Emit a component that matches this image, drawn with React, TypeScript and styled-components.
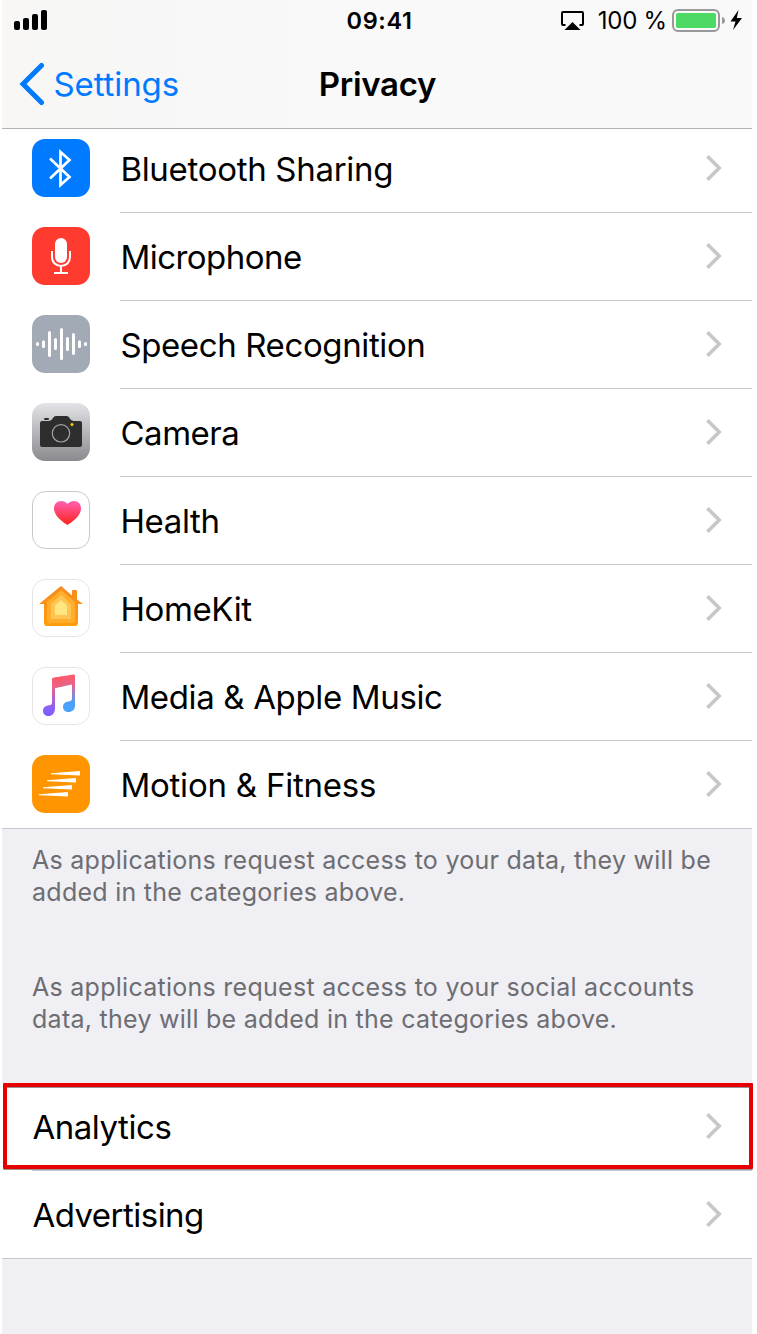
import React from 'react';
import styled, { createGlobalStyle } from 'styled-components';

const GlobalStyle = createGlobalStyle`
  * { box-sizing: border-box; }
  body { margin: 0; background: #fff; font-family: Inter, "Liberation Sans", sans-serif; color: #000; }
  svg { display: block; flex: none; }
`;

const Page = styled.div`
  width: 757px;
  height: 1334px;
  overflow: hidden;
`;

const Screen = styled.div`
  width: 750px;
  height: 1334px;
  margin-left: 2px;
  background: #efeff4;
`;

const Header = styled.header`
  position: relative;
  z-index: 1;
  height: 129px;
  border-bottom: 1px solid #b2b2b2;
  background: linear-gradient(90deg, #f8f7f5 0, #f7f7f7 150px, #f9f9f9 330px);
`;

const Bar = styled.div<{ $height: number }>`
  display: grid;
  grid-template-columns: 1fr auto 1fr;
  align-items: center;
  height: ${(p) => p.$height}px;
`;

const StatusRight = styled.div`
  display: flex;
  align-items: center;
  justify-content: flex-end;
  padding-right: 8px;
`;

const Clock = styled.time`
  padding: 1px 0 0 5px;
  font-size: 23.5px;
  line-height: 28px;
  font-weight: 600;
  letter-spacing: 0.6px;
`;

const Percent = styled.span`
  margin: 0 5px 0 14px;
  padding-top: 2px;
  font-size: 24px;
  line-height: 28px;
  letter-spacing: -0.2px;
  white-space: nowrap;
`;

const Battery = styled.svg`
  margin-top: 2px;
`;

const Back = styled.a`
  display: flex;
  align-items: center;
  padding-left: 17px;
  gap: 7.5px;
  color: #007aff;
  font-size: 33px;
  letter-spacing: -0.1px;
`;

const Title = styled.h1`
  margin: 0;
  padding-left: 1px;
  font-size: 33px;
  font-weight: 600;
  letter-spacing: -0.3px;
`;

const List = styled.ul<{ $tucked?: boolean }>`
  margin: ${(p) => (p.$tucked ? '-4px' : '0')} 0 0;
  padding: 0;
  list-style: none;
  background: #fff;
  border-bottom: 1px solid #c8c7cc;
`;

const Row = styled.li`
  display: flex;
  align-items: center;
  height: 88px;
  padding-left: 30px;
  &:last-child { height: 87px; }
`;

const RowBody = styled.div<{ $line: boolean }>`
  display: flex;
  flex: 1;
  align-items: center;
  justify-content: space-between;
  height: 100%;
  padding: 0 30px ${(p) => (p.$line ? 1 : 2)}px 0.4px;
  border-bottom: ${(p) => (p.$line ? '1px solid #c8c7cc' : '0')};
`;

const Label = styled.span<{ $tracking: number }>`
  padding-top: 2px;
  font-size: 33px;
  line-height: 40px;
  letter-spacing: ${(p) => p.$tracking}px;
  white-space: nowrap;
`;

const IconSlot = styled.div`
  width: 88px;
  margin-top: -2px;
`;

const Notes = styled.section`
  display: flex;
  flex-direction: column;
  gap: 63px;
  height: 254px;
  padding: 15px 30px 0;
`;

const Note = styled.p`
  margin: 0;
  color: #6d6d72;
  font-size: 25px;
  line-height: 32px;
  letter-spacing: 0.27px;
  white-space: nowrap;
`;

const Highlighted = styled.div`
  position: relative;
`;

const Marker = styled.div`
  position: absolute;
  z-index: 2;
  top: 0;
  left: 1px;
  width: 750px;
  height: 86px;
  border: 4px solid #e60000;
  border-radius: 1px;
  box-shadow: 0 1px 0 #9b8f92, inset 0 1px 0 #9b8f92;
`;

const Chevron = () => (
  <svg width="18" height="30" viewBox="0 0 18 30" fill="none">
    <path d="M3.4 3.2 L15.2 15 L3.4 26.8" stroke="#c7c7cc" strokeWidth="3.7" />
  </svg>
);

const Tile = ({ fill, stroke, children }: { fill: string; stroke?: string; children: React.ReactNode }) => (
  <svg width="58" height="58" viewBox="0 0 58 58" fill="none">
    <rect x={stroke ? 0.5 : 0} y={stroke ? 0.5 : 0} width={stroke ? 57 : 58} height={stroke ? 57 : 58} rx="13" fill={fill} stroke={stroke} />
    {children}
  </svg>
);

const BluetoothIcon = () => (
  <Tile fill="#007aff">
    <path d="M18 19.5 L37.5 38 L28.5 46 V13 L37.5 21 L18 39.5" stroke="#fff" strokeWidth="2.7" />
  </Tile>
);

const MicrophoneIcon = () => (
  <Tile fill="#ff3b30">
    <rect x="23" y="11" width="12" height="25" rx="6" fill="#fff" />
    <path d="M20 24 V30 C20 35.5 24 39 29 39 C34 39 38 35.5 38 30 V24 M29 39 V46 M22 46 H36" stroke="#fff" strokeWidth="2" />
  </Tile>
);

const waves = [
  [5.5, 27, 31], [11.5, 25.2, 33], [17.5, 16, 42], [23.5, 23, 35], [29.5, 13, 45],
  [35.5, 22, 36], [41.5, 18, 40], [47.5, 25.2, 33], [53.5, 27, 31],
];

const SpeechIcon = () => (
  <Tile fill="#a2aab5">
    {waves.map(([x, top, bottom]) => (
      <rect key={x} x={x - 1.5} y={top} width="3" height={bottom - top} rx="1.5" fill="#fff" />
    ))}
  </Tile>
);

const CameraIcon = () => (
  <Tile fill="url(#cameraTile)">
    <defs>
      <linearGradient id="cameraTile" x1="0" y1="0" x2="0" y2="1">
        <stop stopColor="#e3e3e8" />
        <stop offset="1" stopColor="#8a898e" />
      </linearGradient>
    </defs>
    <path d="M8 20 Q8 18 10 18 H17 Q19.5 18 21 15 Q22 13 24 13 H34.5 Q36.5 13 37.5 15 Q39 18 41.5 18 H48 Q50 18 50 20 V42 Q50 44 48 44 H10 Q8 44 8 42 Z" fill="#2e2e2e" />
    <rect x="12" y="15" width="5" height="2" rx="1" fill="#2e2e2e" />
    <circle cx="29" cy="30.3" r="8.7" stroke="#a3a3a5" strokeWidth="1.2" />
    <circle cx="40" cy="21.5" r="1.5" fill="#ffcc00" />
  </Tile>
);

const HealthIcon = () => (
  <Tile fill="#fff" stroke="#c8c7cc">
    <defs>
      <linearGradient id="heart" x1="0" y1="0" x2="0" y2="1">
        <stop stopColor="#ff5fb5" />
        <stop offset="1" stopColor="#ff2418" />
      </linearGradient>
    </defs>
    <path d="M35.5 34 C34 33 22 26 22 17.5 C22 13 25 10 29 10 C32 10 34.5 11.5 35.5 13 C36.5 11.5 39 10 42 10 C46 10 49 13 49 17.5 C49 26 37 33 35.5 34 Z" fill="url(#heart)" />
  </Tile>
);

const HomeKitIcon = () => (
  <Tile fill="#fff" stroke="#e5e5e7">
    <defs>
      <linearGradient id="house" x1="0" y1="0" x2="0" y2="1">
        <stop stopColor="#f78a20" />
        <stop offset="1" stopColor="#ff9d0c" />
      </linearGradient>
    </defs>
    <path d="M29 7 L40 16.5 V12 Q40 11 41 11 H44 Q45 11 45 12 V20.5 L51 25 H46 V44 Q46 47 43 47 H15 Q12 47 12 44 V25 H7 Z" fill="url(#house)" />
    <path d="M29 11 L43 23 V42 Q43 44 41 44 H17 Q15 44 15 42 V23 Z" fill="#ffad2a" />
    <path d="M29 16 L39 25 V40 H19 V25 Z" fill="#ffc552" />
    <path d="M29 21 L35 26.5 V36 H23 V26.5 Z" fill="#ffe680" />
  </Tile>
);

const MusicIcon = () => (
  <Tile fill="#fff" stroke="#e5e5e7">
    <defs>
      <linearGradient id="noteBlue" gradientUnits="userSpaceOnUse" x1="30" y1="8" x2="30" y2="48">
        <stop stopColor="#ff5964" />
        <stop offset="0.25" stopColor="#e4648f" />
        <stop offset="0.7" stopColor="#4aa0f9" />
        <stop offset="1" stopColor="#45a5ff" />
      </linearGradient>
      <linearGradient id="notePurple" gradientUnits="userSpaceOnUse" x1="30" y1="8" x2="30" y2="48">
        <stop stopColor="#ff5560" />
        <stop offset="0.3" stopColor="#ea6488" />
        <stop offset="0.85" stopColor="#8660ff" />
        <stop offset="1" stopColor="#805cff" />
      </linearGradient>
    </defs>
    <path d="M20 12.5 Q20 11 22 10.7 L41 7.6 Q43 7.2 43 9 V38 C43 43 40 45 36.5 45 C33.5 45 31 43 31 40 C31 35.5 35 34.5 37.5 34.2 Q40 34 40 31.5 V17.5 L23 21 Z" fill="url(#noteBlue)" />
    <path d="M20 12.5 Q20 11 22 10.7 L31 9.2 V19.3 L23 21 V41 C23 46.5 20 49 16.5 49 C13.5 49 11 47 11 44 C11 40 14 38.8 17 38.3 Q20 38 20 35.5 Z" fill="url(#notePurple)" />
  </Tile>
);

const MotionIcon = () => (
  <Tile fill="#ff9500">
    <path d="M19 18.2 L48 16 V20.5 L19 19.2 Z M15 25.2 L44 23 V27.5 L15 26.2 Z M11 32.2 L40 30 V34.5 L11 33.2 Z M7 39.2 L36 37 V41.5 L7 40.2 Z" fill="#fff" />
  </Tile>
);

const categories = [
  { name: 'Bluetooth Sharing', Icon: BluetoothIcon, tracking: -0.3 },
  { name: 'Microphone', Icon: MicrophoneIcon, tracking: -0.53 },
  { name: 'Speech Recognition', Icon: SpeechIcon, tracking: -0.38 },
  { name: 'Camera', Icon: CameraIcon, tracking: -0.45 },
  { name: 'Health', Icon: HealthIcon, tracking: -0.35 },
  { name: 'HomeKit', Icon: HomeKitIcon, tracking: -0.38 },
  { name: 'Media & Apple Music', Icon: MusicIcon, tracking: -0.35 },
  { name: 'Motion & Fitness', Icon: MotionIcon, tracking: -0.22 },
];

const reports = [
  { name: 'Analytics', tracking: -0.45 },
  { name: 'Advertising', tracking: -0.52 },
];

export default function App() {
  return (
    <Page>
      <GlobalStyle />
      <Screen>
        <Header>
          <Bar $height={40}>
            <svg width="46" height="20" viewBox="0 0 46 20">
              <rect x="12" y="11" width="6" height="9" rx="2" />
              <rect x="21" y="8" width="6" height="12" rx="2" />
              <rect x="30" y="4" width="6" height="16" rx="2" />
              <rect x="39" y="0" width="6" height="20" rx="2" />
            </svg>
            <Clock>09:41</Clock>
            <StatusRight>
              <svg width="24" height="20" viewBox="0 0 24 20" fill="none">
                <path d="M5.5 15 H3 Q2 15 2 14 V3 Q2 2 3 2 H22 Q23 2 23 3 V14 Q23 15 22 15 H19.5" stroke="#000" strokeWidth="2" />
                <path d="M12.5 12 L20.5 20 H4.5 Z" fill="#000" />
              </svg>
              <Percent>100 %</Percent>
              <Battery width="72" height="24" viewBox="0 0 72 24" fill="none">
                <rect x="1" y="1" width="46" height="21" rx="5" stroke="#999" strokeWidth="2" />
                <rect x="4" y="4" width="40" height="15" rx="2" fill="#4cd964" />
                <path d="M50 8 Q53 9 53 11.5 Q53 14 50 15 Z" fill="#999" />
                <path d="M66.5 1 L58.5 12.5 H63.5 L61 21 L70 9 H64.8 Z" fill="#000" />
              </Battery>
            </StatusRight>
          </Bar>
          <Bar $height={88}>
            <Back>
              <svg width="27" height="44" viewBox="0 0 27 44" fill="none">
                <path d="M22.5 3.5 L4 22 L22.5 40.5" stroke="#007aff" strokeWidth="5" strokeLinecap="round" />
              </svg>
              Settings
            </Back>
            <Title>Privacy</Title>
          </Bar>
        </Header>
        <List $tucked>
          {categories.map(({ name, Icon, tracking }, i) => (
            <Row key={name}>
              <IconSlot><Icon /></IconSlot>
              <RowBody $line={i < categories.length - 1}>
                <Label $tracking={tracking}>{name}</Label>
                <Chevron />
              </RowBody>
            </Row>
          ))}
        </List>
        <Notes>
          <Note>As applications request access to your data, they will be<br />added in the categories above.</Note>
          <Note>As applications request access to your social accounts<br />data, they will be added in the categories above.</Note>
        </Notes>
        <Highlighted>
          <List>
            {reports.map(({ name, tracking }, i) => (
              <Row key={name}>
                <RowBody $line={i < reports.length - 1}>
                  <Label $tracking={tracking}>{name}</Label>
                  <Chevron />
                </RowBody>
              </Row>
            ))}
          </List>
          <Marker />
        </Highlighted>
      </Screen>
    </Page>
  );
}
